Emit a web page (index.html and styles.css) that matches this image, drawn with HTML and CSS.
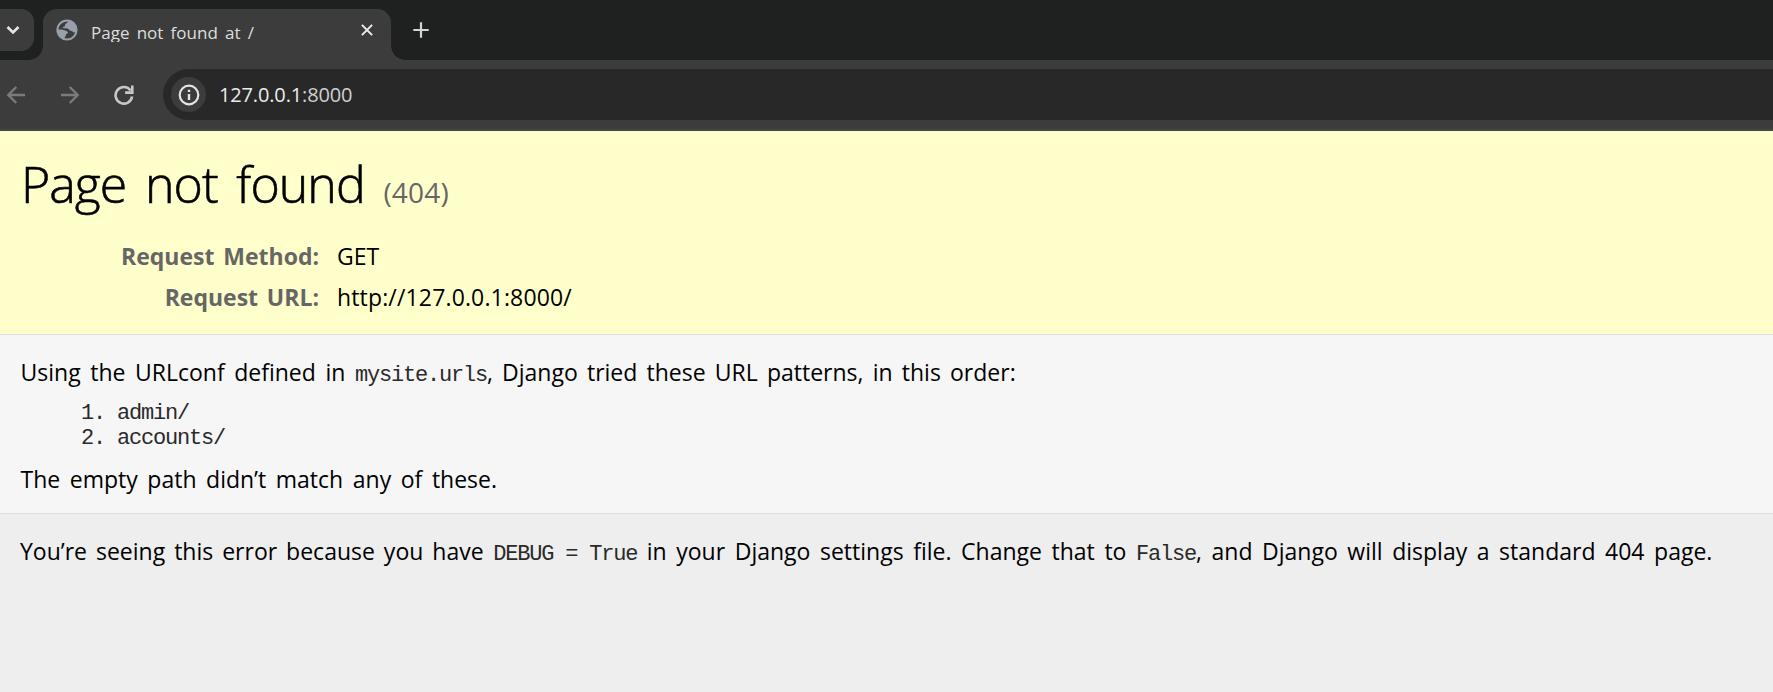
FILE: index.html
```
<!DOCTYPE html>
<html lang="en">
<head>
<meta charset="utf-8">
<title>Page not found at /</title>
<link rel="stylesheet" href="styles.css">
</head>
<body>
<div class="browser">
  <div class="tabstrip">
    <button class="tab-search" aria-label="Search tabs">
      <svg width="14" height="10" viewBox="0 0 14 10"><path d="M1.500 2l5.500 5.500L12.500 2" fill="none" stroke="#e6e6e6" stroke-width="2.600"/></svg>
    </button>
    <div class="tab">
      <svg class="globe" width="22" height="22" viewBox="0 0 22 22">
        <circle cx="11" cy="11" r="9.600" fill="none" stroke="#9aa0aa" stroke-width="2"/>
        <path d="M12.500 1.500C12.500 4 9 4 9 6.300C9 8.500 6.500 7.500 6.500 9C8 9.800 12.500 8.800 13 10.500C13.500 12.300 16 11.500 17 13C17.500 13.800 19 13.500 20 13C21.500 7 18 2 12.500 1.500Z" fill="#9aa0aa"/>
        <path d="M1.300 10.500C4 10.200 7 10.500 8.500 11.200C10 12 12 12 12 13.500C12 15 9.800 14.500 9.800 16.200C9.800 17.800 8 18 8.500 20.300C4.500 19.500 1.200 15.500 1.300 10.500Z" fill="#9aa0aa"/>
      </svg>
      <span class="tab-title">Page not found at /</span>
      <svg class="close" width="12" height="12" viewBox="0 0 12 12"><path d="M.9.9l10.200 10.200M11.100.9L.9 11.100" stroke="#ececec" stroke-width="2"/></svg>
    </div>
    <svg class="plus" width="16" height="16" viewBox="0 0 16 16"><path d="M8 .3v15.400M.3 8h15.400" stroke="#d4d4d4" stroke-width="2.200"/></svg>
  </div>
  <div class="toolbar">
    <svg class="nav-icon" width="20" height="20" viewBox="0 0 20 20"><path d="M19 10H2.500M10.300 2L2.300 10l8 8" fill="none" stroke="#7b7b7b" stroke-width="2.400"/></svg>
    <svg class="nav-icon forward" width="20" height="20" viewBox="0 0 20 20"><path d="M1 10h16.500M9.700 2l8 8-8 8" fill="none" stroke="#7b7b7b" stroke-width="2.400"/></svg>
    <svg class="nav-icon reload" width="20" height="20" viewBox="0 0 20 20"><path d="M16.600 5.400A8.300 8.300 0 1 0 18.100 11.500" fill="none" stroke="#c7c7c7" stroke-width="2.600"/><path d="M18.300.4v7.200h-7.200" fill="none" stroke="#c7c7c7" stroke-width="2.600"/></svg>
    <div class="omnibox">
      <span class="site-info">
        <svg width="22" height="22" viewBox="0 0 22 22"><circle cx="11" cy="11" r="9.300" fill="none" stroke="#e4e4e4" stroke-width="2.200"/><path d="M11 9.900v6M11 5.700v2.300" stroke="#e4e4e4" stroke-width="2.400"/></svg>
      </span>
      <span class="address"><span class="host">127.0.0.1</span>:8000</span>
    </div>
  </div>
</div>
<header class="summary">
  <h1>Page not found <small>(404)</small></h1>
  <dl class="meta">
    <dt>Request Method:</dt><dd>GET</dd>
    <dt>Request URL:</dt><dd class="url">http://127.0.0.1:8000/</dd>
  </dl>
</header>
<main class="info">
  <p>Using the URLconf defined in <code>mysite.urls</code><span class="tail">, Django tried these URL patterns, in this order:</span></p>
  <ol>
    <li>admin/</li>
    <li>accounts/</li>
  </ol>
  <p>The empty path didn’t match any of these.</p>
</main>
<footer class="explanation">
  <p><span class="lead">You’re seeing this error because you have</span> <code>DEBUG = True</code> in your Django settings file. Change that to <code>False</code>, and Django will display a standard 404 page.</p>
</footer>
</body>
</html>
```
FILE: styles.css
```
* {
  box-sizing: border-box;
  margin: 0;
  padding: 0;
}

body {
  height: 692px;
  display: flex;
  flex-direction: column;
  overflow: hidden;
  background: #eee;
  color: #000;
  font-family: "Open Sans", "Noto Sans", sans-serif;
  font-size: 23px;
  line-height: 30px;
  word-spacing: 3.6px;
}

svg {
  display: block;
  flex: none;
}

/* Browser frame */
.tabstrip {
  display: flex;
  height: 60px;
  padding-top: 9px;
  background: #1f2120;
}

.tab-search {
  display: flex;
  align-items: center;
  width: 34px;
  height: 42px;
  padding-left: 6px;
  border: 0;
  border-radius: 0 13px 13px 0;
  background: #3c3c3c;
}

.tab {
  position: relative;
  display: flex;
  width: 348px;
  height: 51px;
  margin-left: 9px;
  padding-left: 13px;
  border-radius: 14px 14px 0 0;
  background: #3c3c3c;
}

.tab::before,
.tab::after {
  content: "";
  position: absolute;
  bottom: 0;
  width: 14px;
  height: 14px;
}

.tab::before {
  right: 100%;
  background: radial-gradient(circle at 0 0, transparent 13.5px, #3c3c3c 14px);
}

.tab::after {
  left: 100%;
  background: radial-gradient(circle at 100% 0, transparent 13.5px, #3c3c3c 14px);
}

.globe {
  margin-top: 10px;
}

.tab-title {
  width: 255px;
  height: 20px;
  margin: 13px 0 0 13px;
  overflow: hidden;
  color: #dedede;
  font-size: 17px;
  line-height: 22px;
  word-spacing: 2.8px;
  white-space: nowrap;
}

.close {
  margin: 15px 0 0 15px;
}

.plus {
  margin: 13px 0 0 22px;
}

.toolbar {
  display: flex;
  align-items: center;
  height: 71px;
  padding-left: 6px;
  border-bottom: 2px solid #474747;
  background: #3c3c3c;
}

.forward {
  margin-left: 34px;
}

.reload {
  margin-left: 34px;
}

.omnibox {
  display: flex;
  align-items: center;
  flex: 1;
  height: 51px;
  margin-left: 29px;
  padding-left: 8px;
  border-radius: 26px 0 0 26px;
  background: #282828;
}

.site-info {
  display: flex;
  align-items: center;
  justify-content: center;
  width: 35px;
  height: 35px;
  border-radius: 50%;
  background: #3c3c3c;
}

.address {
  margin-left: 13px;
  color: #d0d0d0;
  font-size: 20px;
  letter-spacing: -0.15px;
}

.host {
  color: #ececec;
}

/* Error page */
.summary {
  height: 204px;
  padding: 23px 20px 0;
  border-bottom: 1px solid #ddd;
  background: #ffc;
}

h1 {
  height: 60px;
  padding-left: 1px;
  font-size: 50px;
  font-weight: 300;
  line-height: 61px;
  letter-spacing: -0.95px;
  word-spacing: 6.6px;
  -webkit-text-stroke: 0.6px #000;
}

h1 small {
  color: #666;
  font-size: 28px;
  font-weight: 400;
  letter-spacing: 0.2px;
  -webkit-text-stroke: 0;
}

.meta {
  display: grid;
  grid-template-columns: 299px 1fr;
  column-gap: 18px;
  margin-top: 22px;
  line-height: 41px;
}

dt {
  color: #666;
  font-weight: 700;
  text-align: right;
  word-spacing: 2.8px;
}

.url {
  letter-spacing: 0.15px;
}

.info {
  height: 179px;
  padding: 22px 20px 0;
  border-bottom: 1px solid #ddd;
  background: #f6f6f6;
}

.info p {
  padding-left: 0.5px;
}

.tail {
  word-spacing: 3.2px;
}

code,
ol {
  color: #2a2a2a;
  font-family: "Liberation Mono", monospace;
  font-size: 22px;
  letter-spacing: -1.2px;
  word-spacing: 0;
}

code {
  line-height: 1;
}

ol {
  margin: 14px 0 13px;
  padding-left: 97px;
  line-height: 25px;
}

.explanation {
  flex: 1;
  padding: 22px 20px 0;
  white-space: nowrap;
}

.lead {
  word-spacing: 3px;
}
```
